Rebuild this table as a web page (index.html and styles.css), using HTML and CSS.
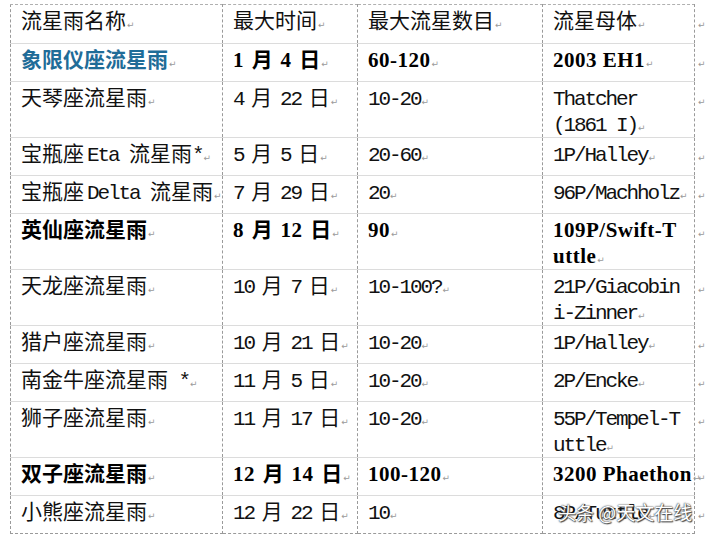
FILE: index.html
```html
<!DOCTYPE html>
<html lang="zh">
<head>
<meta charset="utf-8">
<title>流星雨</title>
<link rel="stylesheet" href="styles.css">
</head>
<body>
<div class="page">
<table class="sheet">
<colgroup><col class="c1"><col class="c2"><col class="c3"><col class="c4"><col class="c5"></colgroup>
<tr class="r1 first">
<td>流星雨名称<span class="p">↵</span></td>
<td>最大时间<span class="p">↵</span></td>
<td>最大流星数目<span class="p">↵</span></td>
<td>流星母体<span class="p">↵</span></td>
<td class="end"><span class="p">↵</span></td>
</tr>
<tr class="r b">
<td class="blue">象限仪座流星雨<span class="p">↵</span></td>
<td><span class="l">1</span> 月 <span class="l">4</span> 日<span class="p">↵</span></td>
<td><span class="l">60-120</span><span class="p">↵</span></td>
<td><span class="l">2003 EH1</span><span class="p">↵</span></td>
<td class="end"><span class="p">↵</span></td>
</tr>
<tr class="r2">
<td>天琴座流星雨<span class="p">↵</span></td>
<td><span class="l">4</span> 月 <span class="l">22</span> 日<span class="p">↵</span></td>
<td><span class="l">10-20</span><span class="p">↵</span></td>
<td><span class="l">Thatcher</span><br><span class="l">(1861 I)</span><span class="p">↵</span></td>
<td class="end"><span class="p">↵</span></td>
</tr>
<tr class="r">
<td>宝瓶座<span class="l lg">Eta </span>流星雨<span class="l">*</span><span class="p">↵</span></td>
<td><span class="l">5</span> 月 <span class="l">5</span> 日<span class="p">↵</span></td>
<td><span class="l">20-60</span><span class="p">↵</span></td>
<td><span class="l">1P/Halley</span><span class="p">↵</span></td>
<td class="end"><span class="p">↵</span></td>
</tr>
<tr class="r">
<td>宝瓶座<span class="l lg">Delta </span>流星雨<span class="p">↵</span></td>
<td><span class="l">7</span> 月 <span class="l">29</span> 日<span class="p">↵</span></td>
<td><span class="l">20</span><span class="p">↵</span></td>
<td><span class="l">96P/Machholz</span><span class="p">↵</span></td>
<td class="end"><span class="p">↵</span></td>
</tr>
<tr class="r2 b">
<td>英仙座流星雨<span class="p">↵</span></td>
<td><span class="l">8</span> 月 <span class="l">12</span> 日<span class="p">↵</span></td>
<td><span class="l">90</span><span class="p">↵</span></td>
<td><span class="l">109P/Swift-T</span><br><span class="l">uttle</span><span class="p">↵</span></td>
<td class="end"><span class="p">↵</span></td>
</tr>
<tr class="r2">
<td>天龙座流星雨<span class="p">↵</span></td>
<td><span class="l">10</span> 月 <span class="l">7</span> 日<span class="p">↵</span></td>
<td><span class="l">10-100?</span><span class="p">↵</span></td>
<td><span class="l">21P/Giacobin</span><br><span class="l">i-Zinner</span><span class="p">↵</span></td>
<td class="end"><span class="p">↵</span></td>
</tr>
<tr class="r">
<td>猎户座流星雨<span class="p">↵</span></td>
<td><span class="l">10</span> 月 <span class="l">21</span> 日<span class="p">↵</span></td>
<td><span class="l">10-20</span><span class="p">↵</span></td>
<td><span class="l">1P/Halley</span><span class="p">↵</span></td>
<td class="end"><span class="p">↵</span></td>
</tr>
<tr class="r">
<td>南金牛座流星雨<span class="l"> *</span><span class="p">↵</span></td>
<td><span class="l">11</span> 月 <span class="l">5</span> 日<span class="p">↵</span></td>
<td><span class="l">10-20</span><span class="p">↵</span></td>
<td><span class="l">2P/Encke</span><span class="p">↵</span></td>
<td class="end"><span class="p">↵</span></td>
</tr>
<tr class="r2">
<td>狮子座流星雨<span class="p">↵</span></td>
<td><span class="l">11</span> 月 <span class="l">17</span> 日<span class="p">↵</span></td>
<td><span class="l">10-20</span><span class="p">↵</span></td>
<td><span class="l">55P/Tempel-T</span><br><span class="l">uttle</span><span class="p">↵</span></td>
<td class="end"><span class="p">↵</span></td>
</tr>
<tr class="r b">
<td>双子座流星雨<span class="p">↵</span></td>
<td><span class="l">12</span> 月 <span class="l">14</span> 日<span class="p">↵</span></td>
<td><span class="l">100-120</span><span class="p">↵</span></td>
<td><span class="l">3200 Phaethon</span><span class="p">↵</span></td>
<td class="end"><span class="p">↵</span></td>
</tr>
<tr class="r last">
<td>小熊座流星雨<span class="p">↵</span></td>
<td><span class="l">12</span> 月 <span class="l">22</span> 日<span class="p">↵</span></td>
<td><span class="l">10</span><span class="p">↵</span></td>
<td><span class="l">8P/Tuttle</span><span class="p">↵</span></td>
<td class="end"><span class="p">↵</span></td>
</tr>
</table>
<div class="watermark"><span class="wm-a">头条</span> @天文在线</div>
</div>
</body>
</html>
```

FILE: styles.css
```css
html, body {
  margin: 0;
  padding: 0;
  background: #ffffff;
}

.page {
  position: relative;
  width: 706px;
  height: 540px;
  overflow: hidden;
  padding: 4px 0 0 10px;
  box-sizing: border-box;
}

.sheet {
  border-collapse: collapse;
  table-layout: fixed;
  width: 696px;
  font-family: "Noto Sans CJK SC", "Noto Sans", sans-serif;
  font-size: 21px;
  color: #111111;
}

.c1 { width: 212px; }
.c2 { width: 135px; }
.c3 { width: 185px; }
.c4 { width: 152px; }
.c5 { width: 12px; }

.sheet td {
  vertical-align: top;
  padding: 1px 0 0 10px;
  line-height: 26px;
  word-spacing: 3px;
  white-space: nowrap;
  overflow: visible;
  border-left: 1px dashed #9a9a9a;
  border-right: 1px dashed #9a9a9a;
  border-top: 1px solid #dcdcdc;
  border-bottom: 1px solid #dcdcdc;
}

.sheet tr td.end {
  border: none;
  padding: 1px 0 0 2px;
}

.r1 td { height: 37px; border-top: 1px dashed #b0b0b0; }
.r td { height: 36px; }
.r2 td { height: 54px; }
.last td { border-bottom: 1px dashed #9a9a9a; }

.l {
  font-family: "Liberation Mono", monospace;
  letter-spacing: -2.1px;
  word-spacing: 0;
  line-height: 0;
}

.lg { margin-left: 3px; }

.b td { font-weight: bold; color: #000000; }
.b .l {
  font-family: "Liberation Serif", serif;
  letter-spacing: 0.5px;
  font-weight: bold;
}

.sheet td.blue { color: #1f6c98; }

.p {
  font-family: "DejaVu Sans", sans-serif;
  font-size: 9px;
  font-weight: normal;
  line-height: 0;
  color: #9a9a9a;
  margin-left: 1px;
  letter-spacing: 0;
}

.watermark {
  position: absolute;
  left: 558px;
  top: 499px;
  font-family: "Noto Sans CJK SC", sans-serif;
  font-size: 19px;
  line-height: 26px;
  color: #ffffff;
  text-shadow: 0 0 1px #333333, 0 0 2px #555555, 1px 1px 1px #444444;
  white-space: nowrap;
}

.wm-a { font-size: 18px; }
```
